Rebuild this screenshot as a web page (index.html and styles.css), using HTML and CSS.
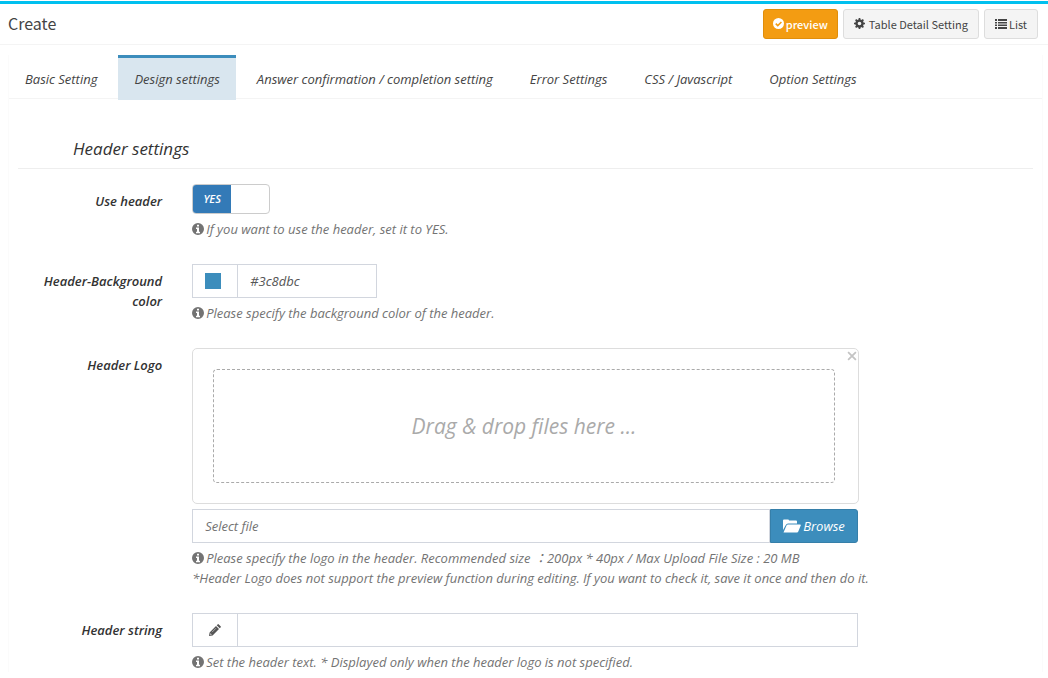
FILE: index.html
```html
<!DOCTYPE html>
<html lang="en">
<head>
<meta charset="utf-8">
<title>Create</title>
<link rel="stylesheet" href="styles.css">
</head>
<body>
<svg class="sprite" aria-hidden="true">
  <symbol id="info" viewBox="0 0 12 12"><path fill="currentColor" fill-rule="evenodd" d="M6 0a6 6 0 1 0 0 12A6 6 0 0 0 6 0zM5 1.700h2v1.700H5zM4 4.500h3v4.200h1v1.500H4V8.700h1V6H4z"/></symbol>
</svg>
<main class="box">
  <header class="box-header">
    <h1 class="box-title">Create</h1>
    <div class="tools">
      <button class="btn btn-warning" type="button">
        <svg width="11" height="11" viewBox="0 0 12 12"><circle cx="6" cy="6" r="6" fill="#fff"/><path d="M3 6.100l2.200 2.200L9.200 4.300" fill="none" stroke="#f39c12" stroke-width="1.700"/></svg>
        preview
      </button>
      <button class="btn btn-default btn-gear" type="button">
        <svg width="11" height="11" viewBox="0 0 12 12"><g fill="#444"><path fill-rule="evenodd" d="M6 1.500a4.500 4.500 0 1 0 0 9 4.500 4.500 0 0 0 0-9zM6 4a2 2 0 1 1 0 4 2 2 0 0 1 0-4z"/><path id="tooth" d="M5.200 0h1.600l.4 2.200H4.800z"/><use href="#tooth" transform="rotate(45 6 6)"/><use href="#tooth" transform="rotate(90 6 6)"/><use href="#tooth" transform="rotate(135 6 6)"/><use href="#tooth" transform="rotate(180 6 6)"/><use href="#tooth" transform="rotate(225 6 6)"/><use href="#tooth" transform="rotate(270 6 6)"/><use href="#tooth" transform="rotate(315 6 6)"/></g></svg>
        Table Detail Setting
      </button>
      <button class="btn btn-default btn-list" type="button">
        <svg width="12" height="10" viewBox="0 0 12 10"><path fill="#444" d="M0 0h2v2H0zM3 0h9v2H3zM0 3h2v1.500H0zM3 3h9v1.500H3zM0 5.500h2V7H0zM3 5.500h9V7H3zM0 8h2v2H0zM3 8h9v2H3z"/></svg>
        List
      </button>
    </div>
  </header>
  <div class="tabs-box">
    <nav class="tabs">
      <a class="tab" href="#">Basic Setting</a>
      <a class="tab active" href="#">Design settings</a>
      <a class="tab" href="#">Answer confirmation / completion setting</a>
      <a class="tab" href="#">Error Settings</a>
      <a class="tab" href="#">CSS / Javascript</a>
      <a class="tab" href="#">Option Settings</a>
    </nav>
    <form class="pane">
      <h2 class="section-title">Header settings</h2>
      <div class="row">
        <label class="label" for="use-header">Use header</label>
        <div class="field">
          <div class="switch">
            <input class="switch-input" type="checkbox" id="use-header" checked>
            <span class="switch-on">YES</span>
          </div>
          <p class="help"><svg class="info"><use href="#info"/></svg>If you want to use the header, set it to YES.</p>
        </div>
      </div>
      <div class="row">
        <label class="label" for="bg-color">Header-Background color</label>
        <div class="field">
          <div class="group group-color">
            <span class="addon"><i class="swatch"></i></span>
            <input class="input" type="text" id="bg-color" value="#3c8dbc">
          </div>
          <p class="help"><svg class="info"><use href="#info"/></svg>Please specify the background color of the header.</p>
        </div>
      </div>
      <div class="row">
        <label class="label" for="logo">Header Logo</label>
        <div class="field">
          <div class="preview">
            <button class="close" type="button" aria-label="Close"><svg width="10" height="10" viewBox="0 0 9 9"><path d="M1 1l7 7M8 1l-7 7" stroke="#c4c4c4" stroke-width="1.600"/></svg></button>
            <div class="dropzone">Drag &amp; drop files here …</div>
          </div>
          <div class="group">
            <input class="input" type="text" id="logo" placeholder="Select file">
            <button class="browse" type="button"><svg width="18" height="14" viewBox="0 0 18 14"><path fill="#fff" d="M0 11V1.500Q0 .5 1 .5h4q1 0 1 1h7q1 0 1 1V4.500H5Q3.500 4.500 2.800 6zM.5 13.500L3.500 6.500Q4 5.500 5 5.500h12.200q.9 0 .6.8L15.300 12.500q-.4 1-1.300 1z"/></svg>Browse</button>
          </div>
          <p class="help"><svg class="info"><use href="#info"/></svg>Please specify the logo in the header. Recommended size ：200px * 40px / Max Upload File Size : 20 MB<br>*Header Logo does not support the preview function during editing. If you want to check it, save it once and then do it.</p>
        </div>
      </div>
      <div class="row">
        <label class="label" for="header-string">Header string</label>
        <div class="field">
          <div class="group">
            <span class="addon"><svg width="12" height="12" viewBox="0 0 12 12"><path fill="#555" fill-rule="evenodd" d="M0 12l.6-3.600L7 2l3 3-6.400 6.400zM1.500 9.200l-.3 1.600 1.600-.3zM7.700 1.300L8.600.4q.6-.6 1.200 0l1.800 1.800q.6.6 0 1.200l-.9.9z"/><path d="M3 8.200l4-4" stroke="#fff" stroke-width=".5"/></svg></span>
            <input class="input" type="text" id="header-string">
          </div>
          <p class="help"><svg class="info"><use href="#info"/></svg>Set the header text. * Displayed only when the header logo is not specified.</p>
        </div>
      </div>
    </form>
  </div>
</main>
</body>
</html>
```

FILE: styles.css
```css
* { box-sizing: border-box; }

body {
  margin: 0;
  padding-top: 1px;
  background: #fff;
  color: #333;
  font: italic 13px/20px "Open Sans", "Noto Sans CJK JP", sans-serif;
}

h1, h2, p { margin: 0; font-weight: 400; }
button, input { font: inherit; margin: 0; }
svg { flex: none; }
.sprite { display: none; }

.box { border-top: 3px solid #00c0ef; }

.box-header {
  display: flex;
  align-items: center;
  justify-content: space-between;
  height: 41px;
  padding: 0 10px 0 8px;
  border-bottom: 1px solid #f4f4f4;
  font-family: "Noto Sans CJK JP", sans-serif;
  font-style: normal;
}
.box-title { padding-bottom: 3px; font-size: 16px; color: #444; }

.tools { display: flex; gap: 5px; }
.btn {
  display: flex;
  align-items: center;
  gap: 2px;
  height: 30px;
  padding: 0 10px 1px;
  border: 1px solid #ddd;
  border-radius: 3px;
  background: #f4f4f4;
  color: #444;
  font-size: 11px;
  white-space: nowrap;
}
.btn-gear { gap: 4px; }
.btn-warning {
  padding: 0 9px 1px;
  border-color: #e08e0b;
  background: #f39c12;
  color: #fff;
  font-weight: 500;
}

.tabs-box {
  margin: 10px 5px 0 8px;
  border: solid #fbfbfb;
  border-width: 0 1px;
}
.tabs {
  display: flex;
  gap: 5px;
  height: 44px;
  border-bottom: 1px solid #f4f4f4;
}
.tab {
  height: 45px;
  padding: 11px 16px;
  border-top: 3px solid transparent;
  color: #444;
  text-decoration: none;
  white-space: nowrap;
}
.tab.active {
  border-top-color: #3c8dbc;
  background: #d9e6ef;
}

.pane { padding: 40px 9px 0; }
.section-title {
  margin-bottom: 15px;
  padding: 0 55px 9px;
  border-bottom: 1px solid #eee;
  font-size: 17px;
}

.row {
  display: grid;
  grid-template-columns: 2fr 8fr 2fr;
  margin: 0 -15px 25px;
}
.label {
  padding: 7px 15px 0;
  text-align: right;
  font-weight: 600;
}
.field { min-width: 0; padding: 0 15px; }

.help {
  margin-top: 5px;
  color: #737373;
  white-space: nowrap;
}
.info {
  width: 12px;
  height: 12px;
  margin-right: 2px;
  vertical-align: -1px;
}

.switch {
  position: relative;
  width: 78px;
  height: 30px;
  border: 1px solid #ccc;
  border-radius: 4px;
  overflow: hidden;
}
.switch-input {
  position: absolute;
  inset: 0;
  width: 100%;
  height: 100%;
  opacity: 0;
}
.switch-on {
  display: block;
  width: 50%;
  background: #337ab7;
  color: #fff;
  font-size: 11px;
  font-weight: 600;
  line-height: 28px;
  text-align: center;
}

.group { display: flex; height: 34px; margin-right: 1px; }
.group-color { width: 185px; }
.addon {
  display: flex;
  flex: none;
  align-items: center;
  justify-content: center;
  width: 45px;
  border: 1px solid #d2d6de;
  border-right: 0;
}
.swatch { width: 16px; height: 16px; margin-right: 4px; background: #3c8dbc; }
.input {
  flex: 1;
  min-width: 0;
  padding: 0 12px;
  border: 1px solid #d2d6de;
  border-radius: 0;
  background: #fff;
  color: #555;
}
.input::placeholder { color: #737373; opacity: 1; }

.preview {
  position: relative;
  margin-bottom: 5px;
  padding: 20px 23px 20px 20px;
  border: 1px solid #ddd;
  border-radius: 5px;
}
.close {
  position: absolute;
  top: 2px;
  right: 1px;
  display: flex;
  padding: 0;
  border: 0;
  background: none;
}
.dropzone {
  padding: 46px 0;
  border: 1px dashed #aaa;
  border-radius: 4px;
  color: #aaa;
  font-size: 21px;
  text-align: center;
}
.browse {
  display: flex;
  align-items: center;
  gap: 2px;
  padding: 0 12px;
  border: 1px solid #367fa9;
  border-radius: 0 3px 3px 0;
  background: #3c8dbc;
  color: #fff;
}
```
